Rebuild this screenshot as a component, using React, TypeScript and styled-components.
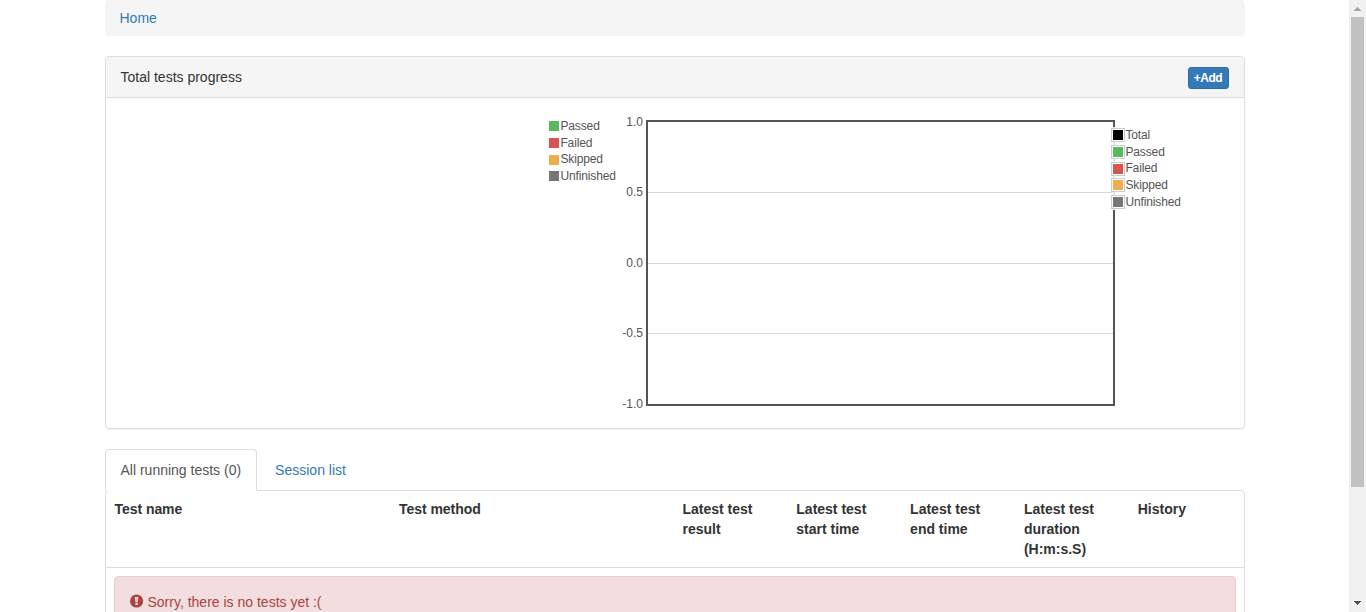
import React from "react";
import styled, { createGlobalStyle } from "styled-components";

const GlobalStyle = createGlobalStyle`
  *, *::before, *::after { box-sizing: border-box; }
  html, body { margin: 0; background: #fff; overflow: hidden; }
  body {
    font-family: "Liberation Sans", Arial, sans-serif;
    font-size: 14px;
    line-height: 20px;
    color: #333;
  }
`;

const Screen = styled.div`
  display: flex;
  height: 612px;
  overflow: hidden;
`;

const Viewport = styled.div`
  flex: 1;
  min-width: 0;
  overflow: hidden;
`;

const Container = styled.main`
  width: 1140px;
  margin: 0 auto;
`;

const Link = styled.a`
  color: #337ab7;
  text-decoration: none;
`;

const Breadcrumb = styled.nav`
  padding: 8px 15px;
  margin-bottom: 20px;
  background: #f5f5f5;
  border-radius: 4px;
`;

const Panel = styled.section`
  margin-bottom: 20px;
  border: 1px solid #ddd;
  border-radius: 4px;
  box-shadow: 0 1px 1px rgba(0, 0, 0, 0.05);
`;

const PanelHeading = styled.header`
  display: flex;
  align-items: center;
  justify-content: space-between;
  height: 41px;
  padding: 0 15px;
  background: #f5f5f5;
  border-bottom: 1px solid #ddd;
  border-radius: 3px 3px 0 0;
`;

const AddButton = styled.button`
  width: 41px;
  height: 22px;
  margin-top: 1px;
  padding: 1px 5px;
  border: 1px solid #2e6da4;
  border-radius: 3px;
  background: #337ab7;
  color: #fff;
  font: bold 12px/18px "Liberation Sans", Arial, sans-serif;
  letter-spacing: -0.5px;
`;

const PanelBody = styled.div`
  height: 330px;
  overflow: hidden;
`;

const Chart = styled.svg`
  display: block;
  margin-left: 434.5px;
  font-size: 12px;
  fill: #545454;
`;

const LegendLabel = styled.text`
  letter-spacing: -0.12px;
`;

const Tabs = styled.div`
  display: flex;
  gap: 2px;
`;

const Tab = styled.a<{ $active?: boolean }>`
  position: relative;
  z-index: ${(p) => (p.$active ? 1 : 0)};
  height: 42px;
  margin-bottom: -1px;
  padding: 10px 15px;
  border: 1px solid ${(p) => (p.$active ? "#ddd" : "transparent")};
  border-bottom-color: transparent;
  border-radius: 4px 4px 0 0;
  background: ${(p) => (p.$active ? "#fff" : "transparent")};
  color: ${(p) => (p.$active ? "#555" : "#337ab7")};
`;

const TestTable = styled.section`
  height: 300px;
  border: 1px solid #ddd;
  border-radius: 4px;
`;

const HeaderRow = styled.div`
  display: grid;
  grid-template-columns: 25% 25% repeat(5, 10%);
  height: 77px;
  border-bottom: 1px solid #ddd;
`;

const HeaderCell = styled.div`
  padding: 8px;
  font-weight: bold;

  &:nth-child(-n + 2) {
    padding-left: 9px;
    letter-spacing: -0.05px;
  }
`;

const Alert = styled.div`
  display: flex;
  gap: 4px;
  margin: 8px;
  padding: 15px;
  border: 1px solid #ebccd1;
  border-radius: 4px;
  background: #f2dede;
  color: #a94442;
`;

const AlertIcon = styled.svg`
  flex: none;
  width: 14px;
  height: 14px;
  margin-top: 2px;
`;

const ScrollBar = styled.div`
  display: flex;
  flex-direction: column;
  align-items: center;
  flex: none;
  width: 17px;
  background: #f1f1f1;
`;

const ScrollArrow = styled.svg`
  width: 17px;
  height: 17px;
`;

const ScrollThumb = styled.div`
  width: 13px;
  height: 470px;
  margin-bottom: auto;
  background: #c1c1c1;
`;

const COLORS = { Total: "#000", Passed: "#5cb85c", Failed: "#d9534f", Skipped: "#f0ad4e", Unfinished: "#777" };

type Status = keyof typeof COLORS;

const pieLegend: { name: Status; y: number; baseline: number }[] = [
  { name: "Passed", y: 121, baseline: 130 },
  { name: "Failed", y: 138, baseline: 147 },
  { name: "Skipped", y: 155, baseline: 163 },
  { name: "Unfinished", y: 171, baseline: 180 },
];

const lineLegend: { name: Status; y: number; baseline: number }[] = [
  { name: "Total", y: 130, baseline: 139 },
  { name: "Passed", y: 147, baseline: 156 },
  { name: "Failed", y: 164, baseline: 172 },
  { name: "Skipped", y: 180, baseline: 189 },
  { name: "Unfinished", y: 197, baseline: 206 },
];

const ticks = [
  { label: "1.0", baseline: 126 },
  { label: "0.5", baseline: 196, line: 192 },
  { label: "0.0", baseline: 267, line: 263 },
  { label: "-0.5", baseline: 337, line: 333 },
  { label: "-1.0", baseline: 408 },
];

const columns = [
  "Test name",
  "Test method",
  "Latest test result",
  "Latest test start time",
  "Latest test end time",
  "Latest test duration (H:m:s.S)",
  "History",
];

function ProgressChart() {
  return (
    <Chart width="660" height="330" viewBox="540 98 660 330">
      {pieLegend.map((item) => (
        <g key={item.name}>
          <rect x="549" y={item.y} width="10" height="10" fill={COLORS[item.name]} />
          <LegendLabel x="560.4" y={item.baseline}>{item.name}</LegendLabel>
        </g>
      ))}
      {ticks.map((tick) => (
        <g key={tick.label}>
          {tick.line && <rect x="648" y={tick.line} width="465" height="1" fill="#d9d9d9" />}
          <text x="643" y={tick.baseline} textAnchor="end">{tick.label}</text>
        </g>
      ))}
      <rect x="647" y="121" width="467" height="284" fill="none" stroke="#545454" strokeWidth="2" />
      <rect x="1112" y="127" width="71" height="83" fill="#fff" fillOpacity="0.85" />
      {lineLegend.map((item) => (
        <g key={item.name}>
          <rect x="1111.5" y={item.y - 1.5} width="13" height="13" fill="#fff" stroke="#ccc" />
          <rect x="1113" y={item.y} width="10" height="10" fill={COLORS[item.name]} />
          <LegendLabel x="1125.4" y={item.baseline}>{item.name}</LegendLabel>
        </g>
      ))}
    </Chart>
  );
}

export default function App() {
  return (
    <Screen>
      <GlobalStyle />
      <Viewport>
        <Container>
          <Breadcrumb>
            <Link>Home</Link>
          </Breadcrumb>
          <Panel>
            <PanelHeading>
              <span>Total tests progress</span>
              <AddButton>+Add</AddButton>
            </PanelHeading>
            <PanelBody>
              <ProgressChart />
            </PanelBody>
          </Panel>
          <Tabs>
            <Tab $active>All running tests (0)</Tab>
            <Tab>Session list</Tab>
          </Tabs>
          <TestTable>
            <HeaderRow>
              {columns.map((column) => (
                <HeaderCell key={column}>{column}</HeaderCell>
              ))}
            </HeaderRow>
            <Alert>
              <AlertIcon viewBox="0 0 14 14">
                <circle cx="6.6" cy="7" r="6.6" fill="#a94442" />
                <path d="M4.9 2.9h3.4l-.5 5H5.4zM5.4 8.8h2.4V11H5.4z" fill="#f2dede" />
                <path d="M6.2 3.5h.8v3.4h-.8z" fill="#a94442" fillOpacity="0.35" />
              </AlertIcon>
              <span>Sorry, there is no tests yet :(</span>
            </Alert>
          </TestTable>
        </Container>
      </Viewport>
      <ScrollBar>
        <ScrollArrow viewBox="0 0 17 17" shapeRendering="crispEdges">
          <path d="M8 7h1v1h1v1h1v1h1v1H5v-1h1V9h1V8h1z" fill="#a3a3a3" />
        </ScrollArrow>
        <ScrollThumb />
        <ScrollArrow viewBox="0 0 17 17" shapeRendering="crispEdges">
          <path d="M5 6h7v1h-1v1h-1v1H9v1H8V9H7V8H6V7H5z" fill="#505050" />
        </ScrollArrow>
      </ScrollBar>
    </Screen>
  );
}
